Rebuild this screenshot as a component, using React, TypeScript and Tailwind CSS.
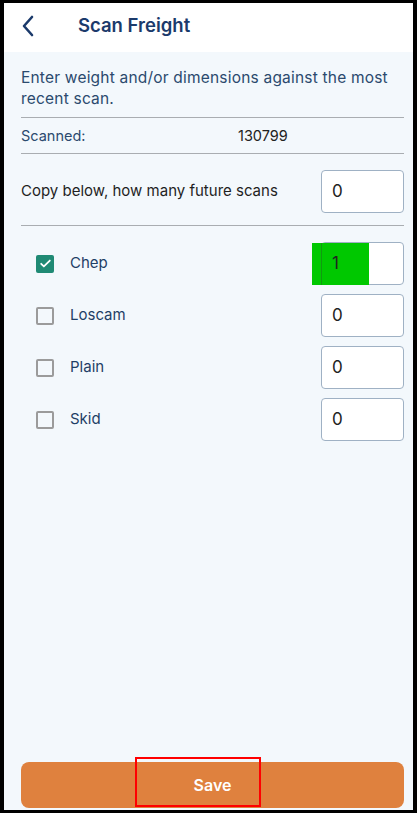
import React from "react";

const rows = [
  { label: "Chep", checked: true, value: "1" },
  { label: "Loscam", checked: false, value: "0" },
  { label: "Plain", checked: false, value: "0" },
  { label: "Skid", checked: false, value: "0" },
];

const Box = ({ checked }: { checked: boolean }) =>
  checked ? (
    <div className="flex h-[18px] w-[18px] items-center justify-center rounded-[2px] bg-[#1f8a74]">
      <svg width="13" height="13" viewBox="0 0 24 24" fill="none" stroke="white" strokeWidth="3.2" strokeLinecap="round" strokeLinejoin="round">
        <path d="M4 12.5l5 5L20 6.5" />
      </svg>
    </div>
  ) : (
    <div className="h-[18px] w-[18px] rounded-[2px] border-2 border-[#9b9b9b]" />
  );

const App = () => {
  return (
    <div className="h-[813px] w-[417px] bg-black pb-[3px] pl-[4px] pr-[4px] pt-[3px] font-['Inter',sans-serif]">
      <div className="flex h-full flex-col bg-[#f3f8fc]">
        <div className="flex h-[49px] items-center bg-white pb-[3px]">
          <svg className="ml-[17px]" width="14" height="22" viewBox="0 0 14 22" fill="none" stroke="#1b3a6b" strokeWidth="2.6" strokeLinecap="round" strokeLinejoin="round">
            <path d="M11 2L3 11l8 9" />
          </svg>
          <span className="ml-[43px] text-[18.5px] font-semibold text-[#1b3a6b]">Scan Freight</span>
        </div>

        <div className="flex flex-1 flex-col pl-[17px] pr-[9px]">
          <p className="mt-[15px] text-[15.5px] leading-[21px] tracking-[0.2px] text-[#2b4a6e]">
            Enter weight and/or dimensions against the most recent scan.
          </p>
          <div className="mt-[8px] border-t border-[#a9adb1]" />
          <div className="flex h-[35px] items-center text-[14.5px] text-[#2b4a6e]">
            <span className="w-[217px]">Scanned:</span>
            <span className="text-[#222]">130799</span>
          </div>
          <div className="border-t border-[#a9adb1]" />
          <div className="flex items-center justify-between pb-[12px] pt-[16px]">
            <span className="text-[15px] text-[#1f1f1f]">Copy below, how many future scans</span>
            <div className="flex h-[43px] w-[83px] items-center rounded-[4px] border border-[#9fb1c4] bg-white pl-[10px] text-[17px] text-[#222]">
              0
            </div>
          </div>
          <div className="border-t border-[#a9adb1]" />
          <div className="mt-[16px] flex flex-col gap-[9px]">
            {rows.map((r) => (
              <div key={r.label} className="flex items-center">
                <div className="ml-[15px]">
                  <Box checked={r.checked} />
                </div>
                <span className="ml-[16px] flex-1 text-[15px] text-[#1f3f66]">{r.label}</span>
                <div className="relative flex h-[43px] w-[83px] items-center rounded-[4px] border border-[#9fb1c4] bg-white pl-[10px] text-[17px] text-[#222]">
                  {r.value === "1" && (
                    <div className="absolute left-[-10px] top-[0px] h-[42px] w-[57px] bg-[#00c800]">
                      <div className="ml-[9px] h-full w-[1px] bg-[#119a11]" />
                    </div>
                  )}
                  <span className="relative">{r.value}</span>
                </div>
              </div>
            ))}
          </div>
          <div className="flex-1" />
          <div className="relative mb-[2px] flex h-[46px] items-center justify-center rounded-[8px] bg-[#df813e] text-[16px] font-semibold text-white">
            Save
            <div className="absolute left-[114px] top-[-5px] h-[50px] w-[126px] border-2 border-[#ff0000]" />
          </div>
        </div>
      </div>
    </div>
  );
};

export default App;
